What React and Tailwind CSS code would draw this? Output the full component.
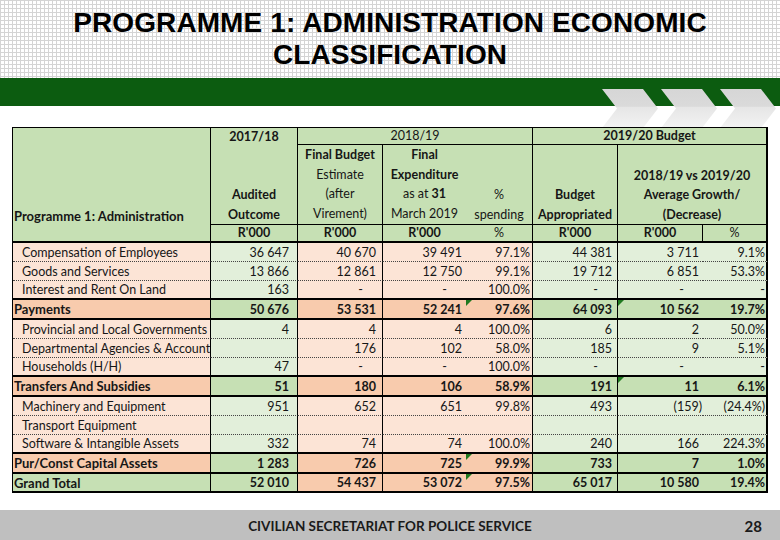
import React from 'react';

const HDR = 'bg-[#c6e0b4]';
const LG = 'bg-[#e2efda]';
const PE = 'bg-[#fce4d6]';
const OR = 'bg-[#f8cbad]';

const rows = [
  { label: 'Compensation of Employees', v: ['36 647', '40 670', '39 491', '97.1%', '44 381', '3 711', '9.1%'] },
  { label: 'Goods and Services', v: ['13 866', '12 861', '12 750', '99.1%', '19 712', '6 851', '53.3%'] },
  { label: 'Interest and Rent On Land', v: ['163', '-', '-', '100.0%', '-', '-', '-'] },
  { label: 'Payments', type: 'sub', marks: [3, 5], v: ['50 676', '53 531', '52 241', '97.6%', '64 093', '10 562', '19.7%'] },
  { label: 'Provincial and Local Governments', v: ['4', '4', '4', '100.0%', '6', '2', '50.0%'] },
  { label: 'Departmental Agencies & Account', v: ['', '176', '102', '58.0%', '185', '9', '5.1%'] },
  { label: 'Households (H/H)', v: ['47', '-', '-', '100.0%', '-', '-', '-'] },
  { label: 'Transfers And Subsidies', type: 'sub', marks: [5], v: ['51', '180', '106', '58.9%', '191', '11', '6.1%'] },
  { label: 'Machinery and Equipment', v: ['951', '652', '651', '99.8%', '493', '(159)', '(24.4%)'] },
  { label: 'Transport Equipment', v: ['', '', '', '', '', '', ''] },
  { label: 'Software & Intangible Assets', v: ['332', '74', '74', '100.0%', '240', '166', '224.3%'] },
  { label: 'Pur/Const Capital Assets', type: 'sub', marks: [3], v: ['1 283', '726', '725', '99.9%', '733', '7', '1.0%'] },
  { label: 'Grand Total', type: 'total', marks: [3], v: ['52 010', '54 437', '53 072', '97.5%', '65 017', '10 580', '19.4%'] },
];

// per value column: backgrounds, right border, right padding
const cols = [
  { item: LG, sub: HDR, r: 'border-r', pr: 'pr-[8px]' },
  { item: PE, sub: OR, r: 'border-r', pr: 'pr-[6px]' },
  { item: PE, sub: OR, r: '', pr: 'pr-[4px]' },
  { item: PE, sub: OR, r: 'border-r', pr: 'pr-[2px]' },
  { item: LG, sub: HDR, r: 'border-r', pr: 'pr-[5px]' },
  { item: LG, sub: HDR, r: '', pr: 'pr-[4px]' },
  { item: LG, sub: HDR, r: 'border-r-2', pr: 'pr-[1px]' },
];

function Chevrons() {
  const xs = [602, 661, 720];
  return (
    <svg className="pointer-events-none absolute left-0 top-0" width="780" height="140" viewBox="0 0 780 140">
      <defs>
        <linearGradient id="chev" x1="0" y1="89" x2="0" y2="130" gradientUnits="userSpaceOnUse">
          <stop offset="0" stopColor="#d6d6d6" />
          <stop offset="0.42" stopColor="#dadada" />
          <stop offset="0.45" stopColor="#e6e6e6" />
          <stop offset="1" stopColor="#f4f4f4" />
        </linearGradient>
      </defs>
      {xs.map((x) => (
        <path
          key={x}
          d={`M${x} 89 L${x + 41} 89 L${x + 56} 108.5 L${x + 41} 128 L${x} 128 L${x + 15} 108.5 Z`}
          fill="url(#chev)"
        />
      ))}
    </svg>
  );
}

function Header() {
  const b = 'border-black';
  return (
    <>
      <div className={`row-span-3 ${HDR} border-r border-b-2 ${b} flex items-end whitespace-nowrap pb-[15px] pl-[1px] text-[13px] font-bold leading-[19.5px]`}>
        Programme 1: Administration
      </div>
      <div className={`row-span-2 ${HDR} border-r border-b ${b} flex flex-col items-center justify-between font-bold`}>
        <div className="leading-[17px]">2017/18</div>
        <div className="text-center leading-[19.5px]">Audited<br />Outcome</div>
      </div>
      <div className={`col-span-3 ${HDR} border-r border-b ${b} flex items-center justify-center`}>2018/19</div>
      <div className={`col-span-3 ${HDR} border-r-2 border-b ${b} flex items-center justify-center font-bold`}>2019/20 Budget</div>

      <div className={`${HDR} border-r border-b ${b} text-center leading-[19.5px]`}>
        <b>Final Budget</b><br />Estimate<br />(after<br />Virement)
      </div>
      <div className={`${HDR} border-b ${b} text-center leading-[19.5px]`}>
        <b>Final<br />Expenditure</b><br />as at <b>31</b><br />March 2019
      </div>
      <div className={`${HDR} border-r border-b ${b} flex flex-col justify-end text-center leading-[19.5px]`}>
        <div>%</div>
        <div>spending</div>
      </div>
      <div className={`${HDR} border-r border-b ${b} flex flex-col justify-end text-center font-bold leading-[19.5px]`}>
        <div>Budget</div>
        <div>Appropriated</div>
      </div>
      <div className={`col-span-2 ${HDR} border-r-2 border-b ${b} flex flex-col justify-end text-center font-bold leading-[19.5px]`}>
        <div>2018/19 vs 2019/20</div>
        <div>Average Growth/</div>
        <div>(Decrease)</div>
      </div>

      <div className={`${HDR} border-r border-b-2 ${b} flex items-center justify-center pt-[1px] font-bold`}>R'000</div>
      <div className={`${HDR} border-r border-b-2 ${b} flex items-center justify-center pt-[1px] font-bold`}>R'000</div>
      <div className={`${HDR} border-b-2 ${b} flex items-center justify-center pt-[1px] font-bold`}>R'000</div>
      <div className={`${HDR} border-r border-b-2 ${b} flex items-center justify-center pt-[1px]`}>%</div>
      <div className={`${HDR} border-r border-b-2 ${b} flex items-center justify-center pt-[1px] font-bold`}>R'000</div>
      <div className={`${HDR} border-r border-b-2 ${b} flex items-center justify-center pt-[1px] font-bold`}>R'000</div>
      <div className={`${HDR} border-r-2 border-b-2 ${b} flex items-center justify-center pt-[1px]`}>%</div>
    </>
  );
}

function Row({ row, next }) {
  const strong = row.type === 'sub' || row.type === 'total';
  const thick = strong || (next && next.type);
  const bottom = thick
    ? 'border-b-2 border-b-black'
    : 'border-b [border-bottom-style:dotted] border-b-[#444]';
  const labelBg = row.type === 'total' ? HDR : row.type === 'sub' ? OR : PE;

  return (
    <>
      <div
        className={`${labelBg} border-r border-r-black ${bottom} flex items-center overflow-hidden whitespace-nowrap pt-[2px] ${
          strong ? 'pl-[1px] text-[13px] font-bold' : 'pl-[9px]'
        }`}
      >
        {row.label}
      </div>
      {row.v.map((val, i) => {
        const c = cols[i];
        const pad = val === '-' && i < 6 ? 'pr-[19px]' : val.startsWith('(') ? 'pr-[1px]' : c.pr;
        return (
          <div
            key={i}
            className={`relative ${strong ? c.sub : c.item} ${c.r} border-r-black ${bottom} flex items-center justify-end whitespace-nowrap pt-[2px] ${pad} ${
              strong ? 'font-bold' : ''
            }`}
          >
            {row.marks && row.marks.includes(i) && (
              <span className="absolute left-0 top-0 h-0 w-0 border-r-[6px] border-t-[6px] border-r-transparent border-t-[#207a20]" />
            )}
            {val}
          </div>
        );
      })}
    </>
  );
}

function Table() {
  return (
    <div className="grid w-[756px] grid-cols-[198px_87px_85px_83px_67px_85px_85px_65px] grid-rows-[17px_80px_18px_19px_19px_19px_20px_19px_19px_19px_20px_19px_19px_19px_20px_19px] border-l border-t border-black text-[12.5px]">
      <Header />
      {rows.map((r, i) => (
        <Row key={r.label} row={r} next={rows[i + 1]} />
      ))}
    </div>
  );
}

export default function App() {
  return (
    <div className="relative flex h-[540px] w-[780px] flex-col overflow-hidden bg-white font-[Lato,sans-serif] text-[#161616]">
      <div className="h-[78px] pt-[7px] text-center font-['Liberation_Sans',Arial,sans-serif] text-[28px] font-bold leading-[32px] tracking-[0.1px] text-black [background-image:linear-gradient(#d4d4d4_1px,transparent_1px),linear-gradient(90deg,#d4d4d4_1px,transparent_1px)] [background-size:4px_4px]">
        <div>PROGRAMME 1: ADMINISTRATION ECONOMIC</div>
        <div>CLASSIFICATION</div>
      </div>
      <div className="h-[28px] bg-[#0c5c10]" />
      <div className="h-[21px]" />
      <Chevrons />
      <div className="relative pl-[12px]">
        <Table />
      </div>
      <footer className="mt-auto grid h-[30px] grid-cols-[1fr_auto_1fr] items-center bg-[#bfbfbf] pt-[2px]">
        <div />
        <div className="text-[13.5px] font-bold text-[#1a1a1a]">CIVILIAN SECRETARIAT FOR POLICE SERVICE</div>
        <div className="justify-self-end pr-[18px] text-[15px] font-bold text-[#1a1a1a]">28</div>
      </footer>
    </div>
  );
}
